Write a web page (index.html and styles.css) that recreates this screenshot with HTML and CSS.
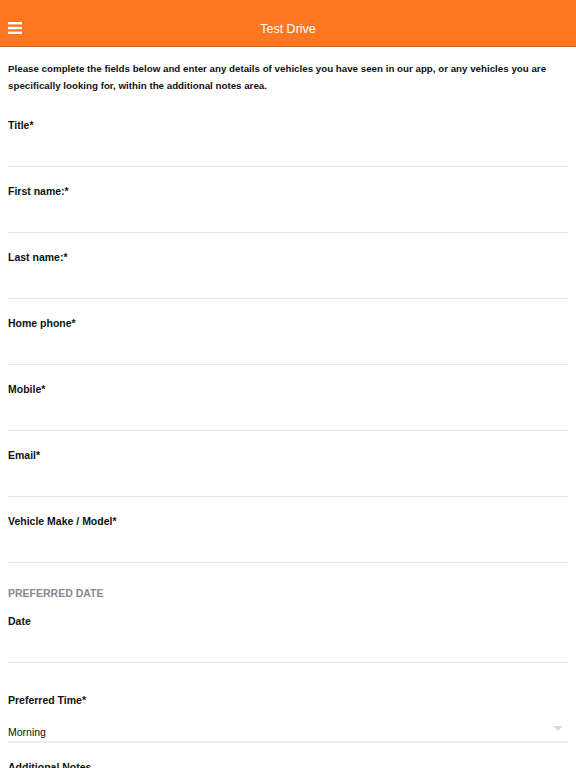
FILE: index.html
```html
<!DOCTYPE html>
<html>
<head>
<meta charset="utf-8">
<link rel="stylesheet" href="styles.css">
</head>
<body>
<header class="topbar">
  <span class="menu-icon">
    <svg width="14" height="12" viewBox="0 0 14 12"><rect x="0" y="0" width="14" height="2.4" fill="#fff"/><rect x="0" y="4.8" width="14" height="2.4" fill="#fff"/><rect x="0" y="9.6" width="14" height="2.4" fill="#fff"/></svg>
  </span>
  <span class="title">Test Drive</span>
</header>
<main class="form">
  <p class="intro">Please complete the fields below and enter any details of vehicles you have seen in our app, or any vehicles you are specifically looking for, within the additional notes area.</p>
  <div class="field first"><label>Title*</label></div>
  <div class="field"><label>First name:*</label></div>
  <div class="field"><label>Last name:*</label></div>
  <div class="field"><label>Home phone*</label></div>
  <div class="field"><label>Mobile*</label></div>
  <div class="field"><label>Email*</label></div>
  <div class="field"><label>Vehicle Make / Model*</label></div>
  <div class="section">PREFERRED DATE</div>
  <div class="field date"><label>Date</label></div>
  <div class="select-field">
    <label>Preferred Time*</label>
    <div class="select"><span>Morning</span><span class="arrow"></span></div>
  </div>
  <div class="notes"><label>Additional Notes</label></div>
</main>
</body>
</html>
```
FILE: styles.css
```css
html, body {
  margin: 0;
  padding: 0;
  background: #fff;
  font-family: "Liberation Sans", Arial, sans-serif;
  color: #111;
}
.topbar {
  height: 34px;
  padding-top: 12px;
  background: #ff7620;
  border-bottom: 1px solid #c8692c;
  display: flex;
  align-items: center;
  justify-content: center;
  position: relative;
}
.menu-icon {
  position: absolute;
  left: 8px;
  top: 22px;
  display: flex;
}
.title {
  color: #fff;
  font-size: 12.5px;
}
.form {
  padding: 0 8px;
}
.intro {
  margin: 0;
  padding-top: 14px;
  font-size: 9.75px;
  font-weight: bold;
  line-height: 16.5px;
}
.field {
  height: 65px;
  border-bottom: 1px solid #e6e6e6;
}
label {
  display: block;
  font-size: 10.5px;
  font-weight: bold;
  padding-top: 17px;
  line-height: 14px;
}
.field.first {
  margin-top: 24px;
  height: 48px;
}
.field.first label {
  padding-top: 0;
}
.section {
  padding-top: 23px;
  font-size: 10.5px;
  font-weight: bold;
  color: #8a8a8a;
  line-height: 14px;
}
.field.date {
  height: 62px;
}
.field.date label {
  padding-top: 14px;
}
.select-field label {
  padding-top: 30px;
}
.select {
  display: flex;
  justify-content: space-between;
  align-items: center;
  height: 20px;
  box-sizing: border-box;
  margin-top: 16px;
  font-size: 10.5px;
  border-bottom: 2px solid #ececec;
}
.arrow {
  width: 0;
  height: 0;
  border-left: 5px solid transparent;
  border-right: 5px solid transparent;
  border-top: 5px solid #d8d8d8;
  margin-right: 5px;
  margin-top: -7px;
}
.notes label {
  padding-top: 17px;
}
```
